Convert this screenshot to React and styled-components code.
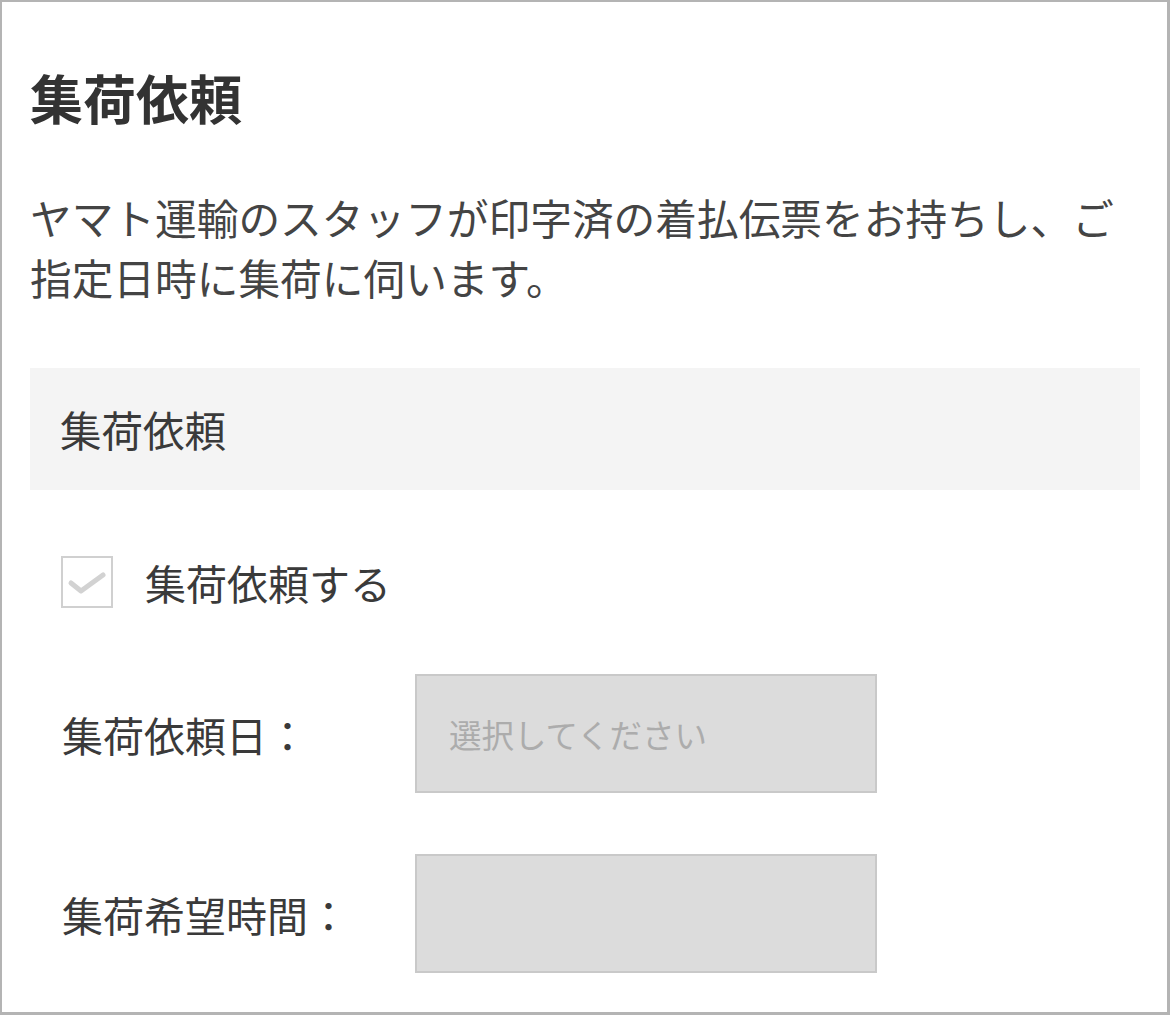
import React from 'react';
import styled, { createGlobalStyle } from 'styled-components';

const GlobalStyle = createGlobalStyle`
    * {
        box-sizing: border-box;
    }
    body {
        margin: 0;
        background: #fff;
        font-family: "Noto Sans CJK JP", "Noto Sans", sans-serif;
        color: #3a3a3a;
    }
`;

const Page = styled.section`
    width: 1170px;
    height: 1015px;
    border: 3px solid #b4b4b4;
    border-top-width: 2px;
    border-left-width: 2px;
    padding: 0 27px 0 28px;
    background: #fff;
    overflow: hidden;
`;

const Title = styled.h1`
    margin: 55px 0 0;
    font-size: 53px;
    line-height: 80px;
    font-weight: 700;
    color: #333;
    letter-spacing: 0;
`;

const Lead = styled.p`
    margin: 50px 0 0;
    font-size: 41.7px;
    line-height: 60px;
    font-weight: 400;
    color: #444;
`;

const SectionHead = styled.div`
    margin-top: 61px;
    height: 122px;
    display: flex;
    align-items: center;
    padding-left: 30px;
    background: #f4f4f4;
    font-size: 41.5px;
    color: #3a3a3a;
`;

const CheckRow = styled.label`
    margin: 62px 0 0 31px;
    display: flex;
    align-items: center;
    gap: 32px;
    font-size: 41px;
    color: #3a3a3a;
`;

const Box = styled.span`
    width: 52px;
    height: 52px;
    flex: none;
    display: flex;
    align-items: center;
    justify-content: center;
    border: 2px solid #d0d0d0;
    background: #fff;
`;

const FieldRow = styled.div`
    margin-top: ${p => p.$gap}px;
    display: flex;
    align-items: center;
`;

const FieldLabel = styled.span`
    width: 385px;
    padding-left: 32px;
    font-size: 41px;
    color: #3a3a3a;
`;

const Select = styled.div`
    width: 462px;
    height: 119px;
    display: flex;
    align-items: center;
    padding-left: 32px;
    background: #dcdcdc;
    border: 2px solid #c9c9c9;
    font-size: 32.5px;
    color: #acacac;
`;

const Check = () => (
    <svg width="40" height="30" viewBox="0 0 40 30">
        <path d="M4 16 L14 24 L36 8" fill="none" stroke="#d2d2d2" strokeWidth="5" strokeLinecap="round" strokeLinejoin="round" />
    </svg>
);

export default function App() {
    return (
        <>
            <GlobalStyle />
            <Page>
                <Title>集荷依頼</Title>
                <Lead>ヤマト運輸のスタッフが印字済の着払伝票をお持ちし、ご指定日時に集荷に伺います。</Lead>
                <SectionHead>集荷依頼</SectionHead>
                <CheckRow>
                    <Box><Check /></Box>
                    集荷依頼する
                </CheckRow>
                <FieldRow $gap={62}>
                    <FieldLabel>集荷依頼日：</FieldLabel>
                    <Select>選択してください</Select>
                </FieldRow>
                <FieldRow $gap={61}>
                    <FieldLabel>集荷希望時間：</FieldLabel>
                    <Select />
                </FieldRow>
            </Page>
        </>
    );
}
